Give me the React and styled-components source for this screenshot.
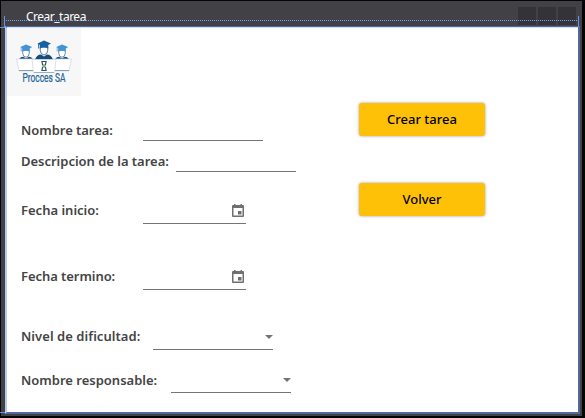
import React from 'react';
import styled, { createGlobalStyle } from 'styled-components';

const GlobalStyle = createGlobalStyle`
  * { box-sizing: border-box; }
  body { margin: 0; background: #000; font-family: "Noto Sans", sans-serif; }
`;

const Screen = styled.div`
  width: 585px;
  height: 418px;
  padding: 1px 3px 2px 1px;
  background: #050505;
  position: relative;
  overflow: hidden;
`;

const Window = styled.div`
  height: 415px;
  padding: 0 2px 2px 4px;
  background: #414146;
  display: flex;
  flex-direction: column;
`;

const TitleBar = styled.header`
  height: 25px;
  flex: none;
  display: flex;
  justify-content: space-between;
  padding: 6px 4px 0 21px;
`;

const Title = styled.span`
  font: 400 12px/20px "Noto Sans", sans-serif;
  letter-spacing: -0.5px;
  color: #fff;
`;

const Controls = styled.div`
  display: flex;
  gap: 2px;
`;

const Control = styled.span`
  width: 18px;
  height: 18px;
  background: #343338;
`;

const Content = styled.main`
  flex: 1;
  border: 2px solid;
  border-color: #50689b #50689b #50689b #b7c8f1;
  background: #fff;
  display: grid;
  grid-template-columns: 352px 126px;
`;

const Form = styled.form`
  display: flex;
  flex-direction: column;
`;

const LogoBox = styled.div`
  width: 74px;
  height: 68px;
  background: #f7f7f8;
`;

const LogoSvg = styled.svg`
  display: block;
  overflow: visible;
`;

const Row = styled.div`
  display: flex;
  height: 24px;
  flex: none;
  margin-top: ${p => p.$gap}px;
  padding-left: 14px;
`;

const Label = styled.label`
  width: ${p => p.$width}px;
  flex: none;
  white-space: nowrap;
  font-size: 13px;
  font-weight: 600;
  line-height: 18px;
  letter-spacing: ${p => p.$track || 0}px;
  padding-top: ${p => p.$drop}px;
  color: #444;
`;

const Field = styled.div`
  width: ${p => p.$width || 120}px;
  height: 24px;
  border-bottom: 1px solid #747474;
  display: flex;
  justify-content: flex-end;
`;

const Actions = styled.div`
  display: flex;
  flex-direction: column;
  gap: 47px;
  padding-top: 75px;
`;

const Button = styled.button`
  height: 33px;
  border: 0;
  border-radius: 3px;
  background: #ffc107;
  box-shadow: 0 0 3px rgba(45, 55, 75, 0.5);
  color: #000;
  font: 500 13px/18px "Noto Sans", sans-serif;
  padding: 0 0 2px;
`;

const CalendarSvg = styled.svg`
  margin: 3px 1px 0 0;
`;

const ArrowSvg = styled.svg`
  margin-top: 9px;
`;

const Guides = styled.svg`
  position: absolute;
  inset: 0;
  pointer-events: none;
`;

const Calendar = () => (
  <CalendarSvg width="14" height="15" viewBox="0 0 14 15">
    <path fill="#707070" fillRule="evenodd" d="M3 1h1.500v1h5V1H11v1h.7c.8 0 1.300.5 1.300 1.300v9.400c0 .8-.5 1.300-1.300 1.300H2.300c-.8 0-1.300-.5-1.300-1.300V3.300C1 2.500 1.500 2 2.300 2H3ZM2.500 5v7.500h9V5ZM7 8h3.500v3.500H7Z" />
  </CalendarSvg>
);

const Arrow = () => (
  <ArrowSvg width="8" height="4" viewBox="0 0 8 4">
    <path d="M0 0h8L4 4Z" fill="#747474" />
  </ArrowSvg>
);

const Graduate = ({ cap, coat }) => (
  <>
    <path d="M-9 15Q-7 10-3 10L0 12l3-2q4 0 6 5Z" fill={coat} />
    <path d="M-3.700 2.500V6Q-3.500 10 0 10.500 3.500 10 3.700 6V2.500Z" fill="#fff" stroke={coat} strokeWidth=".7" />
    <path d="M-6.500-1 0-4l7 3L4.300.5V4Q0 2-4.300 4V.5Z" fill={cap} />
    <path d="M-5.500-.5V4" stroke={cap} strokeWidth=".8" />
  </>
);

const Logo = () => (
  <LogoSvg width="74" height="68" viewBox="0 0 74 68">
    <g transform="translate(19 20) scale(.88)"><Graduate cap="#4394d5" coat="#194e7b" /></g>
    <g transform="translate(55 20) scale(.88)"><Graduate cap="#4394d5" coat="#194e7b" /></g>
    <path d="M9.500 31h18l1 12H12Z" fill="#fff" stroke="#cbd4df" strokeWidth=".7" />
    <path d="M46.500 31h18L62 43H46Z" fill="#fff" stroke="#cbd4df" strokeWidth=".7" />
    <path d="M12 42.500h14M48 42.500h14" stroke="#71889e" strokeWidth=".8" />
    <g transform="translate(37 16.500)"><Graduate cap="#1761a0" coat="#154c7a" /></g>
    <path d="M25 31.500h24l-1.500 13h-21Z" fill="#fff" stroke="#cbd4df" strokeWidth=".7" />
    <path d="M27 44.500h20" stroke="#8ba0b4" strokeWidth=".8" />
    <path d="M34.300 33.500h5.400M34.300 42.500h5.400M35 34q0 3 2 4t2 4M39 34q0 3-2 4t-2 4" fill="none" stroke="#244d7c" strokeWidth="1.200" />
    <circle cx="37" cy="38" r="1.500" fill="#7dbf54" />
    <text transform="translate(15.500 53.500) scale(.7 1)" fontFamily="Roboto, sans-serif" fontSize="12" fill="#23659b" stroke="#23659b" strokeWidth=".25">Procces SA</text>
  </LogoSvg>
);

const rows = [
  { text: 'Nombre tarea:', gap: 21, label: 122, drop: 4, track: -0.04 },
  { text: 'Descripcion de la tarea:', gap: 7, label: 155, drop: 4, track: -0.02 },
  { text: 'Fecha inicio:', gap: 28, label: 122, drop: 1, field: 103, icon: <Calendar /> },
  { text: 'Fecha termino:', gap: 42, label: 122, drop: 1, track: -0.06, field: 103, icon: <Calendar /> },
  { text: 'Nivel de dificultad:', gap: 36, label: 132, drop: 1, track: 0.05, icon: <Arrow /> },
  { text: 'Nombre responsable:', gap: 19, label: 150, drop: 2, icon: <Arrow /> },
];

export default function App() {
  return (
    <>
      <GlobalStyle />
      <Screen>
        <Window>
          <TitleBar>
            <Title>Crear_tarea</Title>
            <Controls><Control /><Control /><Control /></Controls>
          </TitleBar>
          <Content>
            <Form>
              <LogoBox><Logo /></LogoBox>
              {rows.map(row => (
                <Row key={row.text} $gap={row.gap}>
                  <Label $width={row.label} $drop={row.drop} $track={row.track}>{row.text}</Label>
                  <Field $width={row.field}>{row.icon}</Field>
                </Row>
              ))}
            </Form>
            <Actions>
              <Button type="button">Crear tarea</Button>
              <Button type="button">Volver</Button>
            </Actions>
          </Content>
        </Window>
        <Guides width="585" height="418">
          <path d="M6 20.500H578" stroke="#73a4ff" strokeDasharray="1 1" shapeRendering="crispEdges" />
          <path d="M4.500 16v11M578.500 16v11M0 27.500h5M0 412.500h5" stroke="#6294eb" />
          <path d="M7 27.500h571" stroke="#d2def5" />
        </Guides>
      </Screen>
    </>
  );
}
